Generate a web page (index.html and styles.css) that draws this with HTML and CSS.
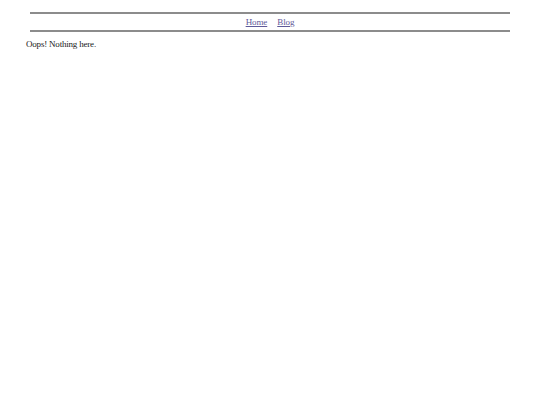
FILE: index.html
```html
<!DOCTYPE html>
<html>
<head>
<meta charset="utf-8">
<link rel="stylesheet" href="styles.css">
</head>
<body>
<div class="page">
  <nav class="topnav">
    <a href="#">Home</a>
    <a href="#">Blog</a>
  </nav>
  <main class="content">
    <p>Oops! Nothing here.</p>
  </main>
</div>
</body>
</html>
```
FILE: styles.css
```css
html, body {
  margin: 0;
  padding: 0;
  background: #fff;
}
.page {
  padding: 12px 26px 0 26px;
  font-family: "Liberation Serif", serif;
  font-size: 9px;
  color: #1a1a1a;
}
.topnav {
  margin: 0 4px;
  border-top: 2px solid #8c8c8c;
  border-bottom: 2px solid #8c8c8c;
  display: flex;
  justify-content: center;
  gap: 10px;
  padding: 3px 0 3px;
  height: 10px;
}
.topnav a {
  color: #5f5a99;
  text-decoration: underline;
  letter-spacing: -0.1px;
}
.content p {
  margin: 7px 0 0;
  letter-spacing: -0.2px;
}
```
